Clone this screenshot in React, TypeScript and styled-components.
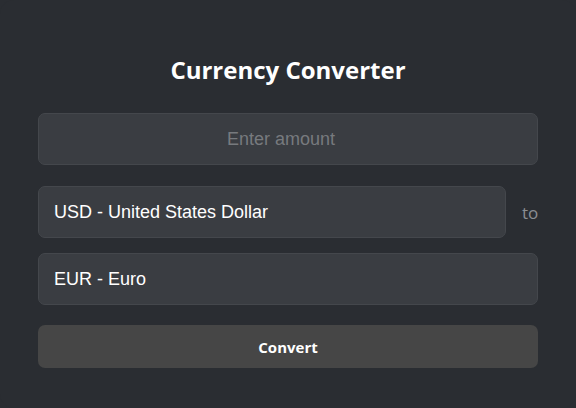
import React from "react";
import styled, { createGlobalStyle } from "styled-components";

const Global = createGlobalStyle`
  html, body { margin: 0; padding: 0; background: #2a2d32; }
  body { width: 576px; height: 408px; overflow: hidden; }
`;

const Card = styled.div`
  box-sizing: border-box;
  width: 576px;
  height: 408px;
  background: #2a2d32;
  border-radius: 14px;
  padding: 55px 38px 40px;
  display: flex;
  flex-direction: column;
`;

const Title = styled.h1`
  margin: 0 0 28px;
  height: 30px;
  line-height: 30px;
  text-align: center;
  color: #ffffff;
  font-family: "Open Sans", sans-serif;
  font-weight: 700;
  font-size: 24px;
`;

const fieldBase = `
  box-sizing: border-box;
  height: 52px;
  background: #3a3d42;
  border: 1px solid #44474c;
  border-radius: 7px;
  color: #ffffff;
  font-family: "Liberation Sans", Arial, sans-serif;
  font-size: 18px;
  padding: 0 15px;
  outline: none;
`;

const AmountInput = styled.input`
  ${fieldBase}
  width: 100%;
  text-align: center;
  padding-right: 29px;
  &::placeholder { color: #777a7e; }
  &::-webkit-inner-spin-button,
  &::-webkit-outer-spin-button { -webkit-appearance: none; margin: 0; }
`;

const Row = styled.div<{ $mt: number }>`
  display: flex;
  align-items: center;
  margin-top: ${(p) => p.$mt}px;
`;

const Select = styled.select`
  ${fieldBase}
  appearance: none;
  -webkit-appearance: none;
  flex: 1;
  min-width: 0;
`;

const To = styled.span`
  margin-left: 16px;
  width: 16px;
  color: #8a8e93;
  font-family: "Open Sans", sans-serif;
  font-size: 17px;
  line-height: 20px;
  padding-top: 2px;
`;

const Button = styled.button`
  box-sizing: border-box;
  margin-top: 20px;
  height: 43px;
  width: 100%;
  background: #464646;
  border: none;
  border-radius: 7px;
  color: #ffffff;
  font-family: "Open Sans", sans-serif;
  font-weight: 700;
  font-size: 15px;
`;

export default function App() {
  return (
    <>
      <Global />
      <Card>
        <Title>Currency Converter</Title>
        <AmountInput type="number" placeholder="Enter amount" />
        <Row $mt={21}>
          <Select defaultValue="USD">
            <option value="USD">USD - United States Dollar</option>
          </Select>
          <To>to</To>
        </Row>
        <Row $mt={15}>
          <Select defaultValue="EUR">
            <option value="EUR">EUR - Euro</option>
          </Select>
        </Row>
        <Button>Convert</Button>
      </Card>
    </>
  );
}
